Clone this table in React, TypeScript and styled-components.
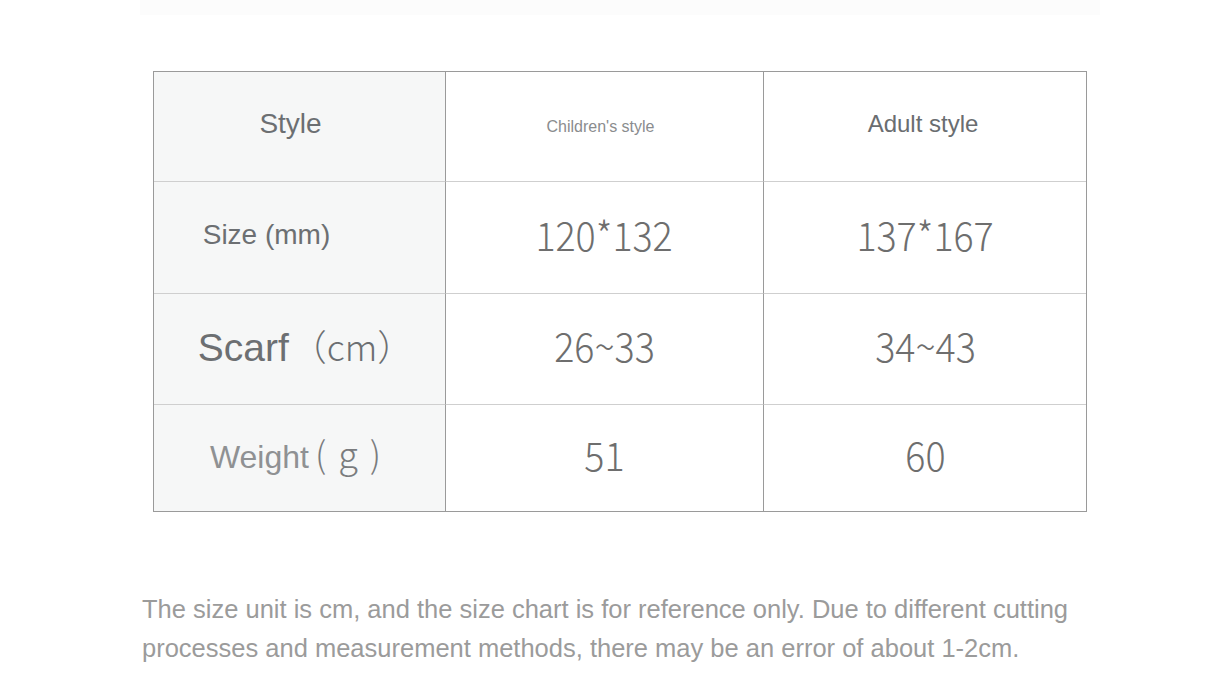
import React from "react";
import styled, { createGlobalStyle } from "styled-components";

const GlobalStyle = createGlobalStyle`
  html, body {
    margin: 0;
    padding: 0;
    background: #ffffff;
  }
  body {
    font-family: "Liberation Sans", Arial, sans-serif;
  }
`;

const rows = [
  { label: "Style", kind: "head", kids: "Children's style", adult: "Adult style", offset: -9, lift: -6 },
  { label: "Size (mm)", kind: "size", kids: "120*132", adult: "137*167", offset: -33, lift: -6 },
  { label: "Scarf", kind: "scarf", kids: "26~33", adult: "34~43", offset: 6, lift: -8 },
  { label: "Weight", kind: "weight", kids: "51", adult: "60", offset: -4, lift: -12 },
];

const App = (): JSX.Element => {
  return (
    <Page>
      <GlobalStyle />
      <TopStrip />
      <Table>
        {rows.map((row, index) => (
          <React.Fragment key={index}>
            <LabelCell $first={index === 0}>
              <LabelText $kind={row.kind} $offset={row.offset} $lift={row.lift}>
                {row.label}
                {row.kind === "scarf" && <Paren>（cm）</Paren>}
                {row.kind === "weight" && <Paren $small>( g )</Paren>}
              </LabelText>
            </LabelCell>
            <ValueCell $first={index === 0}>
              {row.kind === "head" ? (
                <HeadText $small>{row.kids}</HeadText>
              ) : (
                <Number>{row.kids}</Number>
              )}
            </ValueCell>
            <ValueCell $first={index === 0} $right>
              {row.kind === "head" ? (
                <HeadText>{row.adult}</HeadText>
              ) : (
                <Number>{row.adult}</Number>
              )}
            </ValueCell>
          </React.Fragment>
        ))}
      </Table>
      <Note>
        The size unit is cm, and the size chart is for reference only. Due to different cutting
        processes and measurement methods, there may be an error of about 1-2cm.
      </Note>
    </Page>
  );
};

const Page = styled.div`
  width: 1225px;
  height: 680px;
  overflow: hidden;
  display: flex;
  flex-direction: column;
  align-items: flex-start;
`;

const TopStrip = styled.div`
  margin-left: 140px;
  width: 960px;
  height: 15px;
  background: #fcfcfc;
`;

const Table = styled.div`
  margin-top: 56px;
  margin-left: 153px;
  width: 934px;
  display: grid;
  grid-template-columns: 292px 318px 322px;
  grid-template-rows: 109px 112px 111px 107px;
  box-sizing: border-box;
  border: 1px solid #9a9a9a;
`;

const Cell = styled.div<{ $first?: boolean; $right?: boolean }>`
  display: flex;
  align-items: center;
  justify-content: center;
  box-sizing: border-box;
  border-top: ${(p) => (p.$first ? "none" : "1px solid #cfcfcf")};
`;

const LabelCell = styled(Cell)`
  background: #f6f7f7;
  border-right: 1px solid #9a9a9a;
`;

const ValueCell = styled(Cell)`
  background: #ffffff;
  border-right: ${(p) => (p.$right ? "none" : "1px solid #9a9a9a")};
`;

const LabelText = styled.div<{ $kind: string; $offset: number; $lift: number }>`
  transform: translateX(${(p) => p.$offset}px);
  white-space: nowrap;
  color: ${(p) => (p.$kind === "weight" ? "#8f9193" : "#6c6f72")};
  font-size: ${(p) =>
    p.$kind === "scarf" ? "39px" : p.$kind === "weight" ? "32px" : "28px"};
  margin-top: ${(p) => p.$lift}px;
  display: flex;
  align-items: baseline;
`;

const Paren = styled.span<{ $small?: boolean }>`
  font-family: "Noto Sans CJK SC", "Noto Sans", sans-serif;
  font-weight: 300;
  font-size: 36px;
  color: ${(p) => (p.$small ? "#7a7c7e" : "#6c6f72")};
  margin-left: ${(p) => (p.$small ? "6px" : "2px")};
  word-spacing: ${(p) => (p.$small ? "4px" : "0")};
  white-space: pre;
`;

const HeadText = styled.div<{ $small?: boolean }>`
  font-size: ${(p) => (p.$small ? "16px" : "24px")};
  color: ${(p) => (p.$small ? "#8a8c8e" : "#6a6d70")};
  margin-top: ${(p) => (p.$small ? "0" : "-6px")};
  margin-left: ${(p) => (p.$small ? "-8px" : "-4px")};
`;

const Number = styled.div`
  font-family: "Noto Sans CJK SC", "Noto Sans", sans-serif;
  font-weight: 300;
  font-size: 40px;
  color: #6e6e6e;
  transform: scaleX(0.94);
  margin-top: -8px;
`;

const Note = styled.p`
  margin: 78px 0 0 142px;
  width: 960px;
  font-size: 25.5px;
  line-height: 39px;
  color: #9b9b9b;
`;

export default App;
